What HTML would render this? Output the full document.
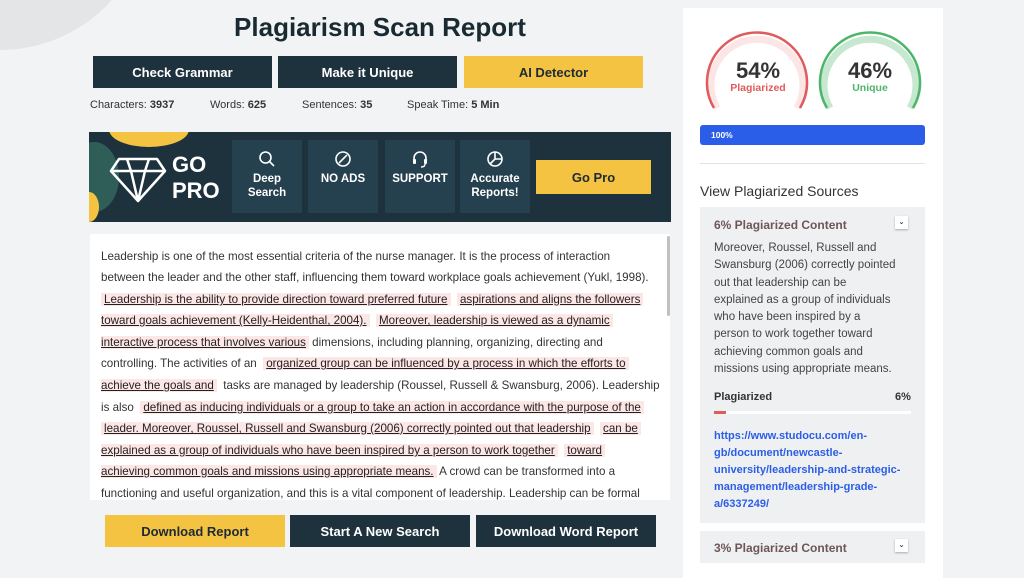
<!DOCTYPE html>
<html><head><meta charset="utf-8"><style>
*{margin:0;padding:0;box-sizing:border-box}
body{width:1024px;height:570px;overflow:hidden;background:#f2f3f5;font-family:"Liberation Sans",sans-serif;position:relative;color:#1d2b36}
.a{position:absolute}
.btn{position:absolute;display:flex;align-items:center;justify-content:center;font-weight:bold;font-size:13px;color:#fff;background:#1e323e}
.y{background:#f5c342;color:#1d2b36}
.tile{position:absolute;top:140px;width:70px;height:73px;background:#25404f;color:#fff;font-size:11.5px;font-weight:bold;text-align:center;line-height:14px}
.tile svg{display:block;margin:10px auto 4px}
.ln{position:absolute;left:101px;font-size:11.6px;color:#333;white-space:nowrap;height:21px;line-height:21px}
.h{background:#fde6e6;text-decoration:underline;color:#222;padding:0 3px}
</style></head><body>
<div class="a" style="left:-150px;top:-250px;width:300px;height:300px;border-radius:50%;background:#e4e5e7"></div>
<div class="a" style="left:0;width:760px;top:12px;text-align:center;font-size:26px;font-weight:bold;color:#1a2a33">Plagiarism Scan Report</div>
<div class="btn" style="left:93px;top:56px;width:179px;height:32px">Check Grammar</div>
<div class="btn" style="left:278px;top:56px;width:179px;height:32px">Make it Unique</div>
<div class="btn y" style="left:464px;top:56px;width:179px;height:32px">AI Detector</div>
<div class="a" style="top:99px;left:90px;font-size:11px;color:#333">Characters: <b>3937</b></div>
<div class="a" style="top:99px;left:210px;font-size:11px;color:#333">Words: <b>625</b></div>
<div class="a" style="top:99px;left:302px;font-size:11px;color:#333">Sentences: <b>35</b></div>
<div class="a" style="top:99px;left:407px;font-size:11px;color:#333">Speak Time: <b>5 Min</b></div>

<div class="a" style="left:89px;top:132px;width:582px;height:90px;background:#1e323e;overflow:hidden">
 <div class="a" style="left:20px;top:-20px;width:80px;height:35px;border-radius:50%;background:#f5c342"></div>
 <div class="a" style="left:-20px;top:10px;width:50px;height:70px;border-radius:50%;background:#2f5e58"></div>
 <div class="a" style="left:-10px;top:60px;width:20px;height:30px;border-radius:50%;background:#f5c342"></div>
 <svg class="a" style="left:20px;top:25px" width="58" height="46" viewBox="0 0 58 46"><path d="M10 2H48L56 14L29 44L2 14Z M2 14H56 M18 2L22 14L29 44L36 14L40 2" fill="none" stroke="#fff" stroke-width="2.5" stroke-linejoin="round"/></svg>
 <div class="a" style="left:83px;top:20px;color:#fff;font-weight:bold;font-size:22px;line-height:26px">GO<br>PRO</div>
</div>
<div class="tile" style="left:232px"><svg width="18" height="18" viewBox="0 0 18 18"><circle cx="7.5" cy="7.5" r="5.5" fill="none" stroke="#fff" stroke-width="1.6"/><path d="M11.5 11.5L16 16" stroke="#fff" stroke-width="1.6"/></svg>Deep<br>Search</div>
<div class="tile" style="left:308px"><svg width="18" height="18" viewBox="0 0 18 18"><circle cx="9" cy="9" r="7" fill="none" stroke="#fff" stroke-width="1.6"/><path d="M13 5L5 13" stroke="#fff" stroke-width="1.6"/></svg>NO ADS</div>
<div class="tile" style="left:385px"><svg width="18" height="18" viewBox="0 0 18 18"><path d="M3 10V8a6 6 0 0 1 12 0v2" fill="none" stroke="#fff" stroke-width="1.6"/><rect x="2" y="9" width="3" height="5" rx="1" fill="#fff"/><rect x="13" y="9" width="3" height="5" rx="1" fill="#fff"/><path d="M14 14q0 3-4 3" fill="none" stroke="#fff" stroke-width="1.4"/></svg>SUPPORT</div>
<div class="tile" style="left:460px"><svg width="18" height="18" viewBox="0 0 18 18"><circle cx="9" cy="9" r="7" fill="none" stroke="#fff" stroke-width="1.6"/><path d="M9 2V9H16M9 9L4 14" fill="none" stroke="#fff" stroke-width="1.6"/></svg>Accurate<br>Reports!</div>
<div class="btn y" style="left:536px;top:160px;width:115px;height:34px">Go Pro</div>

<div class="a" style="left:90px;top:234px;width:580px;height:266px;background:#fff"></div>
<div class="a" style="left:667px;top:236px;width:3px;height:80px;background:#c0c0c0;border-radius:2px"></div>
<div class="ln" style="top:246px">Leadership is one of the most essential criteria of the nurse manager. It is the process of interaction</div>
<div class="ln" style="top:267px">between the leader and the other staff, influencing them toward workplace goals achievement (Yukl, 1998).</div>
<div class="ln" style="top:289px"><span class="h">Leadership is the ability to provide direction toward preferred future</span>&nbsp; <span class="h">aspirations and aligns the followers</span></div>
<div class="ln" style="top:310px"><span class="h" style="padding-left:0">toward goals achievement (Kelly-Heidenthal, 2004).</span> &nbsp;<span class="h">Moreover, leadership is viewed as a dynamic</span></div>
<div class="ln" style="top:332px"><span class="h" style="padding-left:0">interactive process that involves various</span> dimensions, including planning, organizing, directing and</div>
<div class="ln" style="top:353px">controlling. The activities of an &nbsp;<span class="h">organized group can be influenced by a process in which the efforts to</span></div>
<div class="ln" style="top:375px"><span class="h" style="padding-left:0">achieve the goals and</span>&nbsp; tasks are managed by leadership (Roussel, Russell &amp; Swansburg, 2006). Leadership</div>
<div class="ln" style="top:397px">is also &nbsp;<span class="h">defined as inducing individuals or a group to take an action in accordance with the purpose of the</span></div>
<div class="ln" style="top:418px"><span class="h">leader. Moreover, Roussel, Russell and Swansburg (2006) correctly pointed out that leadership</span>&nbsp; <span class="h">can be</span></div>
<div class="ln" style="top:440px"><span class="h" style="padding-left:0">explained as a group of individuals who have been inspired by a person to work together</span>&nbsp; <span class="h">toward</span></div>
<div class="ln" style="top:461px"><span class="h" style="padding-left:0">achieving common goals and missions using appropriate means.</span> A crowd can be transformed into a</div>
<div class="ln" style="top:483px;height:17px;overflow:hidden">functioning and useful organization, and this is a vital component of leadership. Leadership can be formal</div>

<div class="btn y" style="left:105px;top:515px;width:180px;height:32px">Download Report</div>
<div class="btn" style="left:290px;top:515px;width:180px;height:32px">Start A New Search</div>
<div class="btn" style="left:476px;top:515px;width:180px;height:32px">Download Word Report</div>

<div class="a" style="left:683px;top:8px;width:260px;height:570px;background:#fff"></div>
<svg class="a" style="left:700px;top:25px" width="230" height="90" viewBox="0 0 230 90">
 <path d="M17 83A46 46 0 1 1 97 83" fill="none" stroke="#fbe5e5" stroke-width="7"/>
 <path d="M14 83A50 50 0 1 1 100 83" fill="none" stroke="#e05b5b" stroke-width="2.5"/>
 <path d="M130 83A46 46 0 1 1 210 83" fill="none" stroke="#c6e8d0" stroke-width="7"/>
 <path d="M127 83A50 50 0 1 1 213 83" fill="none" stroke="#4db56a" stroke-width="2.5"/>
</svg>
<div class="a" style="left:708px;top:58px;width:100px;text-align:center;font-size:22px;font-weight:bold;color:#333">54%</div>
<div class="a" style="left:708px;top:82px;width:100px;text-align:center;font-size:10.5px;font-weight:bold;color:#e05b5b">Plagiarized</div>
<div class="a" style="left:820px;top:58px;width:100px;text-align:center;font-size:22px;font-weight:bold;color:#333">46%</div>
<div class="a" style="left:820px;top:82px;width:100px;text-align:center;font-size:10.5px;font-weight:bold;color:#4db56a">Unique</div>
<div class="a" style="left:700px;top:125px;width:225px;height:20px;background:#2b5ee8;border-radius:3px;color:#fff;font-size:8.5px;font-weight:bold;line-height:20px;padding-left:11px">100%</div>
<div class="a" style="left:700px;top:163px;width:225px;height:1px;background:#e2e2e2"></div>
<div class="a" style="left:700px;top:183px;font-size:14px;color:#333">View Plagiarized Sources</div>
<div class="a" style="left:700px;top:207px;width:225px;height:316px;background:#eff0f2"></div>
<div class="a" style="left:714px;top:218px;font-size:12px;font-weight:bold;color:#6d5656">6% Plagiarized Content</div>
<div class="a" style="left:895px;top:216px;width:13px;height:13px;background:#fff;box-shadow:0 1px 2px #aaa;font-size:8px;text-align:center;line-height:12px">&#8964;</div>
<div class="a" style="left:714px;top:240px;width:210px;font-size:11.5px;line-height:17.3px;color:#444;white-space:nowrap">Moreover, Roussel, Russell and<br>Swansburg (2006) correctly pointed<br>out that leadership can be<br>explained as a group of individuals<br>who have been inspired by a<br>person to work together toward<br>achieving common goals and<br>missions using appropriate means.</div>
<div class="a" style="left:714px;top:391px;font-size:11px;font-weight:bold;color:#333">Plagiarized</div>
<div class="a" style="left:895px;top:391px;font-size:11px;font-weight:bold;color:#333">6%</div>
<div class="a" style="left:714px;top:411px;width:197px;height:3px;background:#fff"></div>
<div class="a" style="left:714px;top:411px;width:12px;height:3px;background:#e05b5b"></div>
<div class="a" style="left:714px;top:428px;width:200px;font-size:11px;line-height:17px;font-weight:bold;color:#2b5ee8">https://www.studocu.com/en-gb/document/newcastle-university/leadership-and-strategic-management/leadership-grade-a/6337249/</div>
<div class="a" style="left:700px;top:531px;width:225px;height:32px;background:#eff0f2"></div>
<div class="a" style="left:714px;top:541px;font-size:12px;font-weight:bold;color:#6d5656">3% Plagiarized Content</div>
<div class="a" style="left:895px;top:539px;width:13px;height:13px;background:#fff;box-shadow:0 1px 2px #aaa;font-size:8px;text-align:center;line-height:12px">&#8964;</div>
</body></html>
